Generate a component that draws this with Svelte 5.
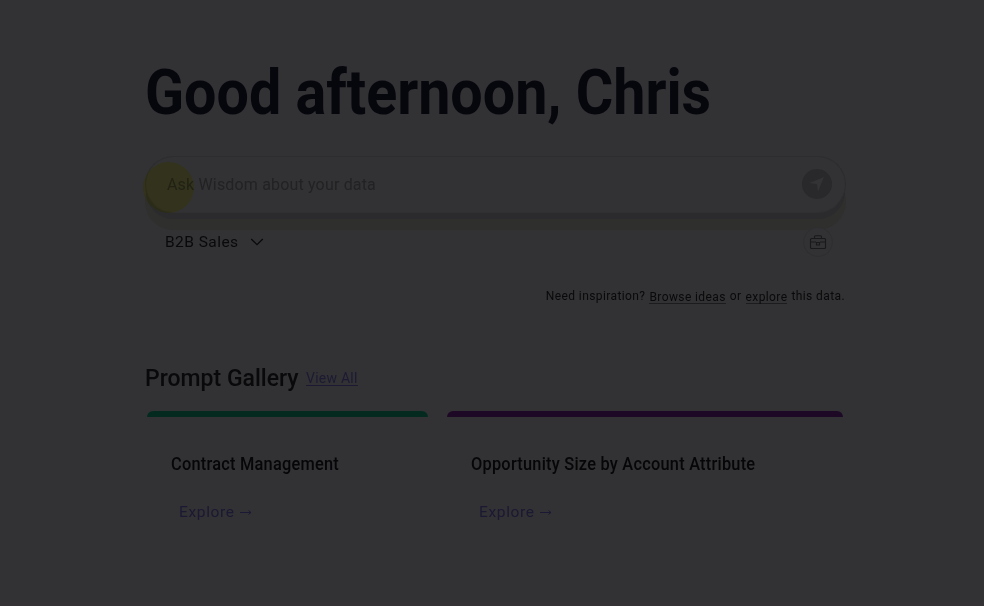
<script>
  const cards = [
    { title: 'Contract Management', kind: 'green' },
    { title: 'Opportunity Size by Account Attribute', kind: 'purple' }
  ];
</script>

<main>
  <h1><span>Good afternoon, Chris</span></h1>

  <div class="search">
    <span class="placeholder">Ask Wisdom about your data</span>
    <span class="send">
      <svg width="16" height="16" viewBox="0 0 16 16"><path d="M.5 7 15 1 9 15.5 8 8.2Z" fill="#333335" /></svg>
    </span>
    <i class="cursor"></i>
  </div>

  <div class="tools">
    <span class="domain">B2B Sales</span>
    <svg class="chevron" width="14" height="8" viewBox="0 0 14 8"><path d="m1.2 1 5.8 5.6L12.8 1" fill="none" stroke="#09090b" stroke-width="1.3" /></svg>
    <span class="kit">
      <svg width="18" height="16" viewBox="0 0 18 16" fill="none" stroke="#19191b" stroke-width="1.1">
        <path d="M5.500 4.500V2.800q0-1 1-1h5q1 0 1 1v1.700M2.500 4.500h13q1 0 1 1v8q0 1-1 1h-13q-1 0-1-1v-8q0-1 1-1ZM1.500 8h5.500M11 8h5.500M7.500 8.500v2.500h3V8.500z" />
      </svg>
    </span>
  </div>

  <p class="ideas"><span>Need inspiration?</span><u>Browse ideas</u><span>or</span><u>explore</u><span>this data.</span></p>

  <div class="heading"><h2><span>Prompt Gallery</span></h2><u>View All</u></div>

  <div class="cards">
    {#each cards as card}
      <article class={card.kind}>
        <h3><span>{card.title}</span></h3>
        <div class="explore"><span>Explore</span>
          <svg width="12" height="8" viewBox="0 0 12 8"><path d="M0 4.500h11M8.500 2.500l2.500 2-2.500 2" fill="none" stroke="currentColor" /></svg>
        </div>
      </article>
    {/each}
  </div>
</main>

<style>
  :global(body) { background: #323234; }
  main {
    box-sizing: border-box; width: 984px; height: 606px; overflow: hidden;
    padding: 57px 138px 0 145px; background: #323234;
    border-bottom: 4px solid #353236;
    font-family: Roboto, "Liberation Sans", sans-serif; color: #09090b;
  }
  h1, h2, h3, p { margin: 0; white-space: nowrap; }
  h1 span, h2 span, h3 span { display: inline-block; transform-origin: left; }
  h1 { height: 99px; font: 700 63px/72px Roboto, sans-serif; color: #06060d; }
  h1 span { transform: scaleX(.911); }
  .search {
    position: relative; box-sizing: border-box; width: 701px; height: 57px;
    display: flex; align-items: center; justify-content: space-between;
    padding: 0 13px 0 21px; border: 1px solid #2d2d2f; border-bottom-color: #303032; border-radius: 29px;
    box-shadow: 0 7px 0 -1px #2b2b2d, 0 17px 0 0 #2f2f2e; background: #323234;
  }
  .placeholder { font-size: 16px; letter-spacing: .17px; color: #222224; }
  .send { display: grid; place-items: center; width: 30px; height: 30px; border-radius: 50%; background: #29292b; margin-top: -2px; }
  .cursor { position: absolute; left: -3px; top: 5px; width: 51px; height: 51px; border-radius: 50%; background: #ffff8c; mix-blend-mode: multiply; }
  .tools { width: 688px; height: 30px; margin-top: 14px; padding-left: 20px; box-sizing: border-box; display: flex; align-items: center; }
  .domain { width: 85px; font-size: 15.5px; letter-spacing: .45px; }
  .kit { position: relative; margin-left: auto; width: 28px; height: 28px; border: 1px solid #2e2e30; border-radius: 50%; background: #323234; display: grid; place-items: center; }
  .ideas { width: 700px; height: 20px; margin-top: 29px; display: flex; justify-content: flex-end; gap: 4px; font-size: 12px; line-height: 20px; letter-spacing: .4px; }
  u { text-decoration: none; }
  .ideas u { height: 13px; margin-top: 4px; line-height: 14px; border-bottom: 1px solid #1c1c1e; }
  .heading { height: 32px; margin-top: 56px; display: flex; align-items: center; }
  h2 { width: 161px; font-size: 24px; font-weight: 500; line-height: 32px; }
  h2 span { transform: scaleX(.958); }
  .heading u { color: #1c1a33; font-size: 14px; line-height: 14px; margin-top: 1px; letter-spacing: .25px; border-bottom: 1px solid #1c1a33; }
  .cards { display: grid; grid-template-columns: 281px 396px; gap: 19px; margin: 17px 0 0 2px; }
  article { box-sizing: border-box; height: 155px; border-radius: 6px 6px 0 0; padding: 41px 0 0 24px; }
  .green { background: linear-gradient(#042a1f, #042a1f) top / 100% 6px no-repeat; }
  .purple { background: linear-gradient(#1d0825, #1d0825) top / 100% 6px no-repeat; }
  h3 { font-size: 17.5px; font-weight: 500; line-height: 24px; color: #060609; }
  h3 span { transform: scaleX(.935); letter-spacing: .25px; }
  .explore { display: flex; align-items: center; gap: 5px; height: 24px; margin: 24px 0 0 8px; font-size: 15.5px; letter-spacing: .65px; color: #1b1833; }
</style>
